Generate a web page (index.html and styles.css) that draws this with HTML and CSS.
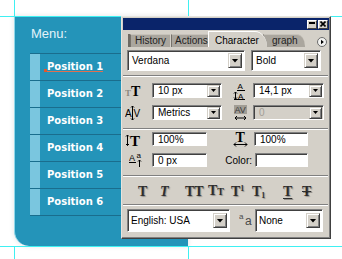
FILE: index.html
```html
<!DOCTYPE html>
<html lang="en">

<head>
    <title>Menu with Character palette</title>
    <link rel="stylesheet" href="styles.css">
</head>

<body>
    <div class="menu">
        <div class="menu-title">Menu:</div>
        <ul class="menu-list">
            <li class="menu-item"><span class="item-bar"></span><span class="item-label item-marked">Position 1</span></li>
            <li class="menu-item"><span class="item-bar"></span><span class="item-label">Position 2</span></li>
            <li class="menu-item"><span class="item-bar"></span><span class="item-label">Position 3</span></li>
            <li class="menu-item"><span class="item-bar"></span><span class="item-label">Position 4</span></li>
            <li class="menu-item"><span class="item-bar"></span><span class="item-label">Position 5</span></li>
            <li class="menu-item"><span class="item-bar"></span><span class="item-label">Position 6</span></li>
        </ul>
    </div>

    <!-- guides -->
    <div class="guide guide-h guide-y16"></div>
    <div class="guide guide-h guide-y246"></div>
    <div class="guide guide-v guide-x14 guide-v-top"></div>
    <div class="guide guide-v guide-x14 guide-v-bottom"></div>
    <div class="guide guide-v guide-x188 guide-v-top"></div>
    <div class="guide guide-v guide-x188 guide-v-bottom"></div>

    <div class="palette">
        <div class="palette-titlebar">
            <span class="tb-btn tb-min"></span>
            <span class="tb-btn">
                <svg width="6" height="6" viewBox="0 0 6 6"><path d="M0.5 0.5l5 5M5.5 0.5l-5 5" stroke="#000" stroke-width="1.6" /></svg>
            </span>
        </div>

        <div class="palette-tabs">
            <span class="tab-stub"></span>
            <span class="tab tab-history">History</span>
            <span class="tab tab-actions">Actions</span>
            <span class="tab tab-active">Character</span>
            <span class="tab tab-paragraph">graph</span>
            <span class="palette-menu">
                <svg width="10" height="10" viewBox="0 0 10 10"><circle cx="5" cy="5" r="4.5" fill="#f2f2f0" stroke="#6a6a6a" /><path d="M4 2.8L6.8 5 4 7.2Z" fill="#000" /></svg>
            </span>
        </div>

        <div class="palette-body">
            <div class="row row-font">
                <div class="field field-lg field-family"><span>Verdana</span><span class="drop"></span></div>
                <div class="field field-lg field-weight"><span>Bold</span><span class="drop"></span></div>
            </div>

            <div class="sep"></div>

            <div class="row row-size">
                <div class="icon-cell cell-first">
                    <svg width="18" height="17" viewBox="0 0 18 17">
                        <text x="0" y="14" class="ic-serif" font-size="9" fill="#8c8880">T</text>
                        <text x="6" y="14" class="ic-serif" font-size="14">T</text>
                    </svg>
                </div>
                <div class="field field-sm field-w70"><span>10 px</span><span class="drop"></span></div>
                <div class="icon-cell cell-leading">
                    <svg width="14" height="20" viewBox="0 0 14 20">
                        <text x="4.5" y="8" class="ic-sans" font-size="8">A</text>
                        <path d="M4 9.5h8M1 18.5h11" stroke="#000" />
                        <path d="M2.5 11v7M1 12.5l1.5-1.5 1.5 1.5M1 16.5l1.5 1.5 1.5-1.5" stroke="#000" fill="none" />
                        <text x="5" y="17.5" class="ic-sans" font-size="8">A</text>
                    </svg>
                </div>
                <div class="field field-sm field-w71"><span>14,1 px</span><span class="drop"></span></div>
            </div>

            <div class="row row-kern">
                <div class="icon-cell cell-first">
                    <svg width="16" height="16" viewBox="0 0 16 16">
                        <text x="0" y="12" class="ic-sans" font-size="10">A</text>
                        <text x="8.5" y="12" class="ic-sans" font-size="10">V</text>
                        <path d="M7.5 1v14M6 2.5l1.5-1.5 1.5 1.5M6 13.5l1.5 1.5 1.5-1.5" stroke="#000" fill="none" />
                    </svg>
                </div>
                <div class="field field-sm field-w70"><span>Metrics</span><span class="drop"></span></div>
                <div class="icon-cell cell-tracking">
                    <svg width="14" height="17" viewBox="0 0 14 17">
                        <rect x="0" y="1" width="13" height="9" fill="#a19d95" />
                        <text x="0.5" y="9" class="ic-sans" font-size="9" fill="#3a3a3a">AV</text>
                        <path d="M1 14h11M3 12l-2 2 2 2M10 12l2 2-2 2" stroke="#000" fill="none" />
                    </svg>
                </div>
                <div class="field field-sm field-w71 field-disabled"><span>0</span><span class="drop"></span></div>
            </div>

            <div class="sep sep-scale"></div>

            <div class="row row-scale">
                <div class="icon-cell cell-first">
                    <svg width="18" height="20" viewBox="0 0 18 20">
                        <path d="M2.5 6v10.5M1 7.5l1.5-1.5 1.5 1.5M1 15l1.5 1.5 1.5-1.5" stroke="#000" fill="none" />
                        <text x="5" y="16.5" class="ic-serif" font-size="15">T</text>
                    </svg>
                </div>
                <div class="field field-text field-w55"><span>100%</span></div>
                <div class="icon-cell cell-hscale">
                    <svg width="16" height="20" viewBox="0 0 16 20">
                        <text x="2.5" y="12.5" class="ic-serif" font-size="14">T</text>
                        <path d="M1 15.5h13M3 13.5l-2 2 2 2M12 13.5l2 2-2 2" stroke="#000" fill="none" />
                    </svg>
                </div>
                <div class="field field-text field-w54"><span>100%</span></div>
            </div>

            <div class="row row-shift">
                <div class="icon-cell cell-shift">
                    <svg width="16" height="20" viewBox="0 0 16 20">
                        <text x="0" y="11" class="ic-sans" font-size="9">A</text>
                        <path d="M0 12.5h7" stroke="#000" />
                        <text x="7.5" y="7.5" class="ic-sans" font-size="8">a</text>
                        <path d="M10.5 17V10M9 11.5l1.5-1.5 1.5 1.5" stroke="#000" fill="none" />
                    </svg>
                </div>
                <div class="field field-text field-w55"><span>0 px</span></div>
                <div class="icon-cell cell-label">Color:</div>
                <div class="field field-text field-w53"></div>
            </div>

            <div class="sep sep-style"></div>

            <div class="style-row">
                <span class="sty">T</span>
                <span class="sty sty-italic">T</span>
                <span class="sty">TT</span>
                <span class="sty">T<span class="sty-small">T</span></span>
                <span class="sty">T<span class="sty-sup">1</span></span>
                <span class="sty">T<span class="sty-sub">1</span></span>
                <span class="sty sty-under">T</span>
                <span class="sty sty-strike">T</span>
            </div>

            <div class="sep"></div>

            <div class="row row-lang">
                <div class="field field-lg field-lang"><span>English: USA</span><span class="drop"></span></div>
                <div class="icon-cell cell-aa">
                    <svg width="15" height="20" viewBox="0 0 15 20">
                        <text x="0" y="8" class="ic-sans" font-size="8" fill="#4a4a4a">a</text>
                        <text x="6" y="14" class="ic-sans" font-size="12" fill="#4a4a4a">a</text>
                    </svg>
                </div>
                <div class="field field-lg field-aa"><span>None</span><span class="drop"></span></div>
            </div>
        </div>
    </div>
</body>

</html>
```

FILE: styles.css
```css
body {
    margin: 0;
    width: 342px;
    height: 259px;
    position: relative;
    overflow: hidden;
    background: #fff;
    font-family: 'Liberation Sans', Arial, sans-serif;
}

/* ---- blue menu ---- */

.menu {
    margin: 16px 0 0 14px;
    width: 174px;
    height: 230px;
    box-sizing: border-box;
    background: #2494b9;
    border-left: 1px solid #8fd8ea;
    border-bottom-left-radius: 15px;
    box-shadow: 0 0 4px 1px rgba(0, 0, 0, 0.08);
    overflow: hidden;
}

.menu-title {
    padding: 10px 0 0 16px;
    font-size: 13px;
    line-height: 15px;
    color: #e2f3f9;
}

.menu-list {
    list-style: none;
    margin: 12px 0 0 15px;
    padding: 0;
}

.menu-item {
    display: flex;
    height: 26px;
    border-top: 1px solid #1a6d8d;
}

.menu-item:last-child {
    border-bottom: 1px solid #1a6d8d;
}

.item-bar {
    width: 10px;
    background: #7ac6df;
}

.item-label {
    margin-left: 7px;
    font: bold 10px/26px 'DejaVu Sans', Verdana, sans-serif;
    color: #fff;
}

.item-marked {
    position: relative;
}

.item-marked::before {
    content: "";
    position: absolute;
    left: -3px;
    top: 15px;
    width: 3px;
    height: 3px;
    background: #e2572c;
}

.item-marked::after {
    content: "";
    position: absolute;
    left: 0;
    top: 17px;
    width: 56px;
    height: 1px;
    background: #e07050;
}

/* ---- guides ---- */

.guide {
    position: absolute;
    background: #3ff0f2;
}

.guide-h {
    left: 0;
    width: 342px;
    height: 1px;
}

.guide-y16 {
    top: 16px;
}

.guide-y246 {
    top: 246px;
}

.guide-v {
    width: 1px;
}

.guide-x14 {
    left: 14px;
}

.guide-x188 {
    left: 188px;
}

.guide-v-top {
    top: 0;
    height: 16px;
}

.guide-v-bottom {
    top: 246px;
    height: 13px;
}

/* ---- character palette ---- */

.palette {
    position: absolute;
    left: 121px;
    top: 16px;
    width: 210px;
    height: 223px;
    box-sizing: border-box;
    padding: 1px;
    background: #d4d0c8;
    border: 1px solid;
    border-color: #e6e4de #404040 #404040 #e6e4de;
    box-shadow: inset -1px -1px 0 #808080;
    font-size: 10px;
    color: #000;
}

.palette-titlebar {
    height: 12px;
    background: #0a246a;
    display: flex;
    justify-content: flex-end;
    align-items: center;
    gap: 1px;
    padding-right: 1px;
}

.tb-btn {
    width: 10px;
    height: 9px;
    box-sizing: border-box;
    background: #d4d0c8;
    border: 1px solid;
    border-color: #fff #404040 #404040 #fff;
    display: flex;
    align-items: center;
    justify-content: center;
}

.tb-min::after {
    content: "";
    width: 6px;
    height: 2px;
    margin-top: -2px;
    background: #000;
}

.palette-tabs {
    height: 17px;
    display: flex;
    align-items: flex-end;
}

.tab-stub {
    width: 2px;
    height: 13px;
    margin-left: 5px;
    background: #6e6a63;
}

.tab {
    height: 13px;
    box-sizing: border-box;
    padding-left: 4px;
    line-height: 12px;
    background: #aaa69e;
    border-left: 1px solid #76726b;
    border-top: 1px solid #c6c2ba;
    color: #222;
    white-space: nowrap;
    overflow: hidden;
}

.tab-history {
    width: 40px;
}

.tab-actions {
    width: 37px;
    margin-left: 1px;
    padding-left: 3px;
}

.tab-active {
    width: 59px;
    height: 16px;
    padding: 3px 0 0 6px;
    background: #d4d0c8;
    border-left-color: #fff;
    border-top-color: #fff;
    border-top-right-radius: 12px 16px;
    color: #000;
    position: relative;
    z-index: 1;
}

.tab-paragraph {
    width: 42px;
    margin-left: -4px;
    padding-left: 8px;
    border-top-right-radius: 8px 12px;
}

.palette-menu {
    margin-left: auto;
    margin-right: 2px;
    width: 10px;
    height: 10px;
}

.palette-menu svg {
    display: block;
}

.palette-body {
    padding: 0 2px 0 4px;
}

.sep {
    border-top: 1px solid #808080;
    border-bottom: 1px solid #fff;
    margin: 0 -1px 0 -4px;
}

.row {
    display: flex;
    align-items: center;
}

.row-font {
    margin-top: 3px;
    gap: 6px;
}

.row-font + .sep {
    margin-top: 4px;
}

.row-size {
    margin-top: 6px;
    height: 15px;
}

.row-kern {
    margin-top: 7px;
    height: 15px;
}

.sep-scale {
    margin-top: 8px;
}

.row-scale {
    margin-top: 2px;
    height: 14px;
}

.row-shift {
    margin-top: 7px;
    height: 14px;
}

.sep-style {
    margin-top: 8px;
}

.row-lang {
    margin-top: 3px;
}

/* fields */

.field {
    box-sizing: border-box;
    display: flex;
    align-items: center;
    padding: 0 2px 0 4px;
    background: #fff;
    border: 1px solid;
    border-color: #808080 #fff #fff #808080;
    box-shadow: inset 1px 1px 0 #404040;
    white-space: nowrap;
}

.field-lg {
    height: 21px;
}

.row-lang .field-lg {
    height: 23px;
}

.field-sm {
    height: 15px;
    padding: 0 1px 0 5px;
}

.field-text {
    height: 14px;
    padding-left: 5px;
}

.field-disabled {
    background: #d4d0c8;
    color: #a29e96;
}

.field-family {
    width: 118px;
}

.field-weight {
    width: 70px;
}

.field-w70 {
    width: 70px;
}

.field-w71 {
    width: 71px;
}

.field-w55 {
    width: 55px;
}

.field-w54 {
    width: 54px;
}

.field-w53 {
    width: 53px;
}

.field-lang {
    width: 103px;
    padding-left: 3px;
}

.field-aa {
    width: 68px;
    padding-left: 3px;
}

.drop {
    margin-left: auto;
    width: 14px;
    height: 15px;
    box-sizing: border-box;
    background: #d4d0c8;
    border: 1px solid;
    border-color: #d4d0c8 #404040 #404040 #d4d0c8;
    box-shadow: inset 1px 1px 0 #fff, inset -1px -1px 0 #808080;
    display: flex;
    align-items: center;
    justify-content: center;
}

.drop::after {
    content: "";
    width: 7px;
    height: 4px;
    background: #000;
    clip-path: polygon(0 0, 100% 0, 50% 100%);
}

.field-sm .drop {
    width: 13px;
    height: 12px;
}

.field-sm .drop::after {
    width: 5px;
    height: 3px;
}

/* icons */

.icon-cell {
    display: flex;
    align-items: center;
}

.icon-cell svg {
    display: block;
}

.cell-first {
    width: 25px;
}

.cell-first svg {
    margin-left: -2px;
}

.cell-leading {
    width: 31px;
    padding-left: 11px;
    box-sizing: border-box;
}

.cell-tracking {
    width: 31px;
    padding-left: 12px;
    box-sizing: border-box;
}

.cell-hscale {
    width: 47px;
    padding-left: 26px;
    box-sizing: border-box;
}

.cell-shift {
    width: 25px;
    padding-left: 2px;
    box-sizing: border-box;
}

.cell-label {
    width: 48px;
    padding-right: 3px;
    box-sizing: border-box;
    justify-content: flex-end;
}

.cell-aa {
    width: 25px;
    padding-left: 9px;
    box-sizing: border-box;
}

.ic-serif {
    font-family: 'Liberation Serif', serif;
    font-weight: bold;
}

.ic-sans {
    font-family: 'Liberation Sans', sans-serif;
}

/* type style buttons */

.style-row {
    display: grid;
    grid-template-columns: 22px 25px 23px 23px 21px 31px 19px 1fr;
    padding-left: 11px;
    height: 27px;
    align-items: center;
    font: bold 14px/27px 'Liberation Serif', serif;
    color: #2e2e2e;
    text-shadow: 1px 1px 1px rgba(0, 0, 0, 0.3);
}

.sty-italic {
    font-style: italic;
}

.sty-small {
    font-size: 10px;
}

.sty-sup {
    font-size: 8px;
    line-height: 0;
    vertical-align: 5px;
}

.sty-sub {
    font-size: 8px;
    line-height: 0;
    vertical-align: -2px;
}

.sty-under {
    text-decoration: underline;
    text-underline-offset: 2px;
}

.sty-strike {
    text-decoration: line-through;
}
```
